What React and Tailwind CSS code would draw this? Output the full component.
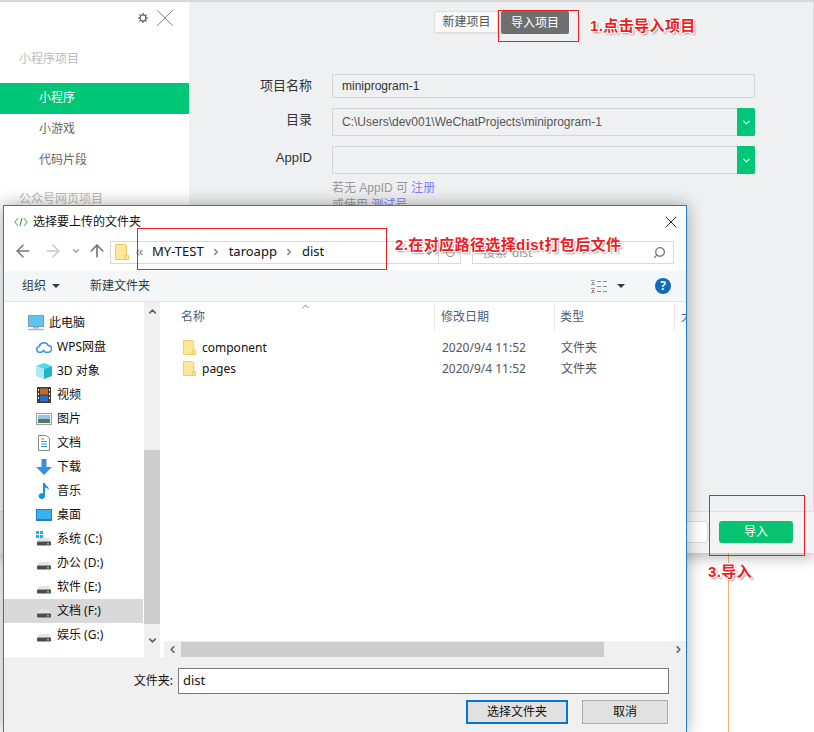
import { ChevronDown, ChevronUp, ChevronLeft, ChevronRight, ChevronsLeft, ArrowLeft, ArrowRight, ArrowUp, RotateCw, Search, X } from 'lucide-react';

const cjk = "font-['Noto_Sans','Noto_Sans_CJK_SC',sans-serif]";
const arial = "font-['Liberation_Sans','Noto_Sans_CJK_SC',sans-serif]";
const noteText = "font-['Liberation_Sans','Noto_Sans_CJK_SC',sans-serif] font-bold text-[15px] leading-[20px] tracking-[0.4px] whitespace-nowrap text-[#ee1c25] [text-shadow:1px_1px_0_#fff,-1px_1px_0_#fff,1px_-1px_0_#fff,-1px_-1px_0_#fff,2px_2px_2px_#999]";

function FolderIcon({ className = 'w-[14px] h-[16px]' }) {
    return (
        <svg viewBox="0 0 14 16" className={className}>
            <path d="M.5.5h10l1 1V15.500H.5z" fill="#fde89a" stroke="#eecb5c" />
            <path d="M10 15.500V11h3.500v4.500z" fill="#fbe28c" stroke="#eecb5c" />
        </svg>
    );
}

function DriveIcon({ windows }) {
    return (
        <svg viewBox="0 0 16 16" className="w-4 h-4">
            {windows && <path d="M0 0h3v3H0zM4 0h3v3H4zM0 4h3v3H0zM4 4h3v3H4z" fill="#14b4ee" />}
            <path d="M3 7h10l2 3.500H1z" fill="#e3e3e3" />
            <rect x="1" y="10.500" width="14" height="4" rx="1" fill="#4d4d4d" />
            <rect x="11" y="12" width="2" height="1.500" fill="#55dd55" />
        </svg>
    );
}

function TreeIcon({ name }) {
    if (name === 'pc') return (
        <svg viewBox="0 0 16 16" className="w-4 h-4">
            <rect x=".5" y=".5" width="15" height="11" fill="#5cc3f2" stroke="#7d9db2" />
            <path d="M5 12h6v1.500H5z" fill="#9bb" />
            <path d="M0 14.500h16" stroke="#a7b4bd" strokeWidth="1.500" />
        </svg>
    );
    if (name === 'cloud') return (
        <svg viewBox="0 0 17 14" className="w-[17px] h-[14px]" fill="none" stroke="#3f8cf0" strokeWidth="1.600">
            <path d="M4 12.500a3 3 0 0 1-.5-6A5 5 0 0 1 13 5.500a3.500 3.500 0 0 1 0 7H10L8 10.500 6 12.500z" />
        </svg>
    );
    if (name === '3d') return (
        <svg viewBox="0 0 16 16" className="w-4 h-4">
            <path d="M8 0l8 3-8 3-8-3z" fill="#4fd8e6" />
            <path d="M0 3l8 3v10l-8-3z" fill="#a8ecf2" />
            <path d="M16 3l-8 3v10l8-3z" fill="#1fb3cc" />
        </svg>
    );
    if (name === 'video') return (
        <svg viewBox="0 0 14 16" className="w-[14px] h-4">
            <rect width="14" height="16" fill="#3c3c3c" />
            <rect x="3" y="1.500" width="8" height="6" fill="#c46a28" />
            <rect x="3" y="8.500" width="8" height="6" fill="#2a6fc4" />
            <path d="M1 2h1v2H1zM1 6h1v2H1zM1 10h1v2H1zM12 2h1v2h-1zM12 6h1v2h-1zM12 10h1v2h-1z" fill="#eee" />
        </svg>
    );
    if (name === 'image') return (
        <svg viewBox="0 0 16 12" className="w-4 h-3">
            <rect x=".5" y=".5" width="15" height="11" fill="#f4f4f4" stroke="#a0a0a0" />
            <rect x="2" y="2" width="12" height="4" fill="#9dc3e6" />
            <rect x="2" y="6" width="12" height="4" fill="#4f7a66" />
        </svg>
    );
    if (name === 'doc') return (
        <svg viewBox="0 0 12 16" className="w-3 h-4">
            <path d="M.5.5h8l3 3v12H.5z" fill="#fff" stroke="#8a8a8a" />
            <path d="M3 4h3M3 6.500h6M3 9h6M3 11.500h6" stroke="#2d9be0" />
        </svg>
    );
    if (name === 'down') return (
        <svg viewBox="0 0 16 16" className="w-4 h-4">
            <path d="M5.500 0h5v8H16l-8 8-8-8h5.500z" fill="#3d8fdc" />
        </svg>
    );
    if (name === 'music') return (
        <svg viewBox="0 0 12 16" className="w-3 h-4">
            <path d="M5 0h2c0 3 4 3 4 7-1-1.500-2-2-4-2.500V13a3.200 3 0 1 1-2-2.700z" fill="#1e8fe0" />
        </svg>
    );
    if (name === 'desktop') return (
        <svg viewBox="0 0 16 12" className="w-4 h-3">
            <rect width="16" height="12" fill="#1f7fc9" />
            <rect x="1" y="1" width="14" height="9" fill="#3ab2f2" />
        </svg>
    );
    return <DriveIcon windows={name === 'c'} />;
}

const treeItems = [
    { icon: 'pc', label: '此电脑', top: true },
    { icon: 'cloud', label: 'WPS网盘' },
    { icon: '3d', label: '3D 对象' },
    { icon: 'video', label: '视频' },
    { icon: 'image', label: '图片' },
    { icon: 'doc', label: '文档' },
    { icon: 'down', label: '下载' },
    { icon: 'music', label: '音乐' },
    { icon: 'desktop', label: '桌面' },
    { icon: 'c', label: '系统 (C:)' },
    { icon: 'd', label: '办公 (D:)' },
    { icon: 'd', label: '软件 (E:)' },
    { icon: 'd', label: '文档 (F:)', selected: true },
    { icon: 'd', label: '娱乐 (G:)' },
];

function BackWindow() {
    return (
        <div className={`absolute left-0 top-0 w-[814px] h-[553px] flex flex-col bg-[#eff0f2] border-t-2 border-[#d8d8d8] shadow-[0_4px_14px_rgba(0,0,0,0.3)] ${arial}`}>
            <div className="flex flex-1 min-h-0">
                {/* Left menu */}
                <div className="w-[189px] bg-white flex flex-col shrink-0">
                    <div className="flex justify-end items-center gap-[2px] pr-[9px] h-[32px]">
                        <svg viewBox="0 0 10 10" className="w-[10px] h-[10px]" fill="none" stroke="#555" strokeWidth="1.200">
                            <circle cx="5" cy="5" r="3" />
                            <path d="M5 0v2M5 8v2M0 5h2M8 5h2M1.500 1.500l1 1M7.500 7.500l1 1M1.500 8.500l1-1M7.500 2.500l1-1" />
                        </svg>
                        <X size={30} strokeWidth={0.8} className="text-[#888]" />
                    </div>
                    <div className="pl-[19px] mt-[15px] text-[12px] leading-[20px] text-[#bbb]">小程序项目</div>
                    <div className="mt-[14px] h-[31px] pl-[39px] pb-[1px] flex items-center bg-[#00c777] text-white text-[12px]">小程序</div>
                    <div className="h-[31px] pl-[39px] pb-[1px] flex items-center text-[#666] text-[12px]">小游戏</div>
                    <div className="h-[31px] pl-[39px] pb-[1px] flex items-center text-[#666] text-[12px]">代码片段</div>
                    <div className="pl-[19px] mt-[13px] text-[12px] leading-[20px] text-[#bbb]">公众号网页项目</div>
                </div>

                {/* Form */}
                <div className="flex-1 pt-[9px] pl-[71px] flex flex-col border-r border-[#dcdcdc]">
                    <div className="flex pl-[174px] h-[23px]">
                        <div className="w-[64px] h-[23px] pl-[1px] flex items-center justify-center rounded-l-[3px] bg-[#fafafa] border border-[#dfdfdf] border-b-2 text-[12px] text-[#555]">新建项目</div>
                        <div className="ml-[3px] w-[68px] h-[23px] flex items-center justify-center rounded-[2px] bg-[#6f6f6f] text-white text-[12px]">导入项目</div>
                    </div>
                    <div className="mt-[40px] flex items-center h-[24px]">
                        <div className="w-[52px] text-right text-[13px] text-[#333] whitespace-nowrap">项目名称</div>
                        <div className="ml-[20px] w-[423px] h-[24px] border border-[#d4d5d7] pl-[9px] flex items-center text-[12px] text-[#333]">miniprogram-1</div>
                    </div>
                    <div className="mt-[10px] flex items-center h-[28px]">
                        <div className="w-[52px] pb-[4px] text-right text-[13px] text-[#333]">目录</div>
                        <div className="ml-[20px] w-[423px] h-[28px] border border-[#d4d5d7] pl-[9px] flex items-center justify-between text-[12px] text-[#555] relative">
                            C:\Users\dev001\WeChatProjects\miniprogram-1
                            <span className="absolute -right-px -top-px w-[18px] h-[28px] bg-[#00c777] rounded-r-[2px] flex items-center justify-center"><ChevronDown size={11} className="text-white" strokeWidth={2.500} /></span>
                        </div>
                    </div>
                    <div className="mt-[10px] flex items-center h-[28px]">
                        <div className="w-[52px] pb-[4px] text-right text-[13px] text-[#333]">AppID</div>
                        <div className="ml-[20px] w-[423px] h-[28px] border border-[#d4d5d7] relative">
                            <span className="absolute -right-px -top-px w-[18px] h-[28px] bg-[#00c777] rounded-r-[2px] flex items-center justify-center"><ChevronDown size={11} className="text-white" strokeWidth={2.500} /></span>
                        </div>
                    </div>
                    <div className="ml-[72px] mt-[6px] text-[12px] leading-[17px] text-[#999]">
                        <div>若无 AppID 可 <span className="text-[#7d7dff]">注册</span></div>
                        <div>或使用 <span className="text-[#7d7dff]">测试号</span></div>
                    </div>
                </div>
            </div>

            {/* Bottom bar */}
            <div className="h-[42px] shrink-0 bg-[#f4f4f5] border-t border-[#e0e0e2] flex items-center justify-end pr-[21px] pb-[2px] gap-[11px]">
                <div className="w-[74px] h-[22px] bg-white border border-[#dedede] rounded-[3px]" />
                <div className="w-[74px] h-[22px] bg-[#07c371] rounded-[3px] flex items-center justify-center text-white text-[12px]">导入</div>
            </div>
        </div>
    );
}

function FileDialog() {
    return (
        <div className={`absolute left-[3px] top-[205px] w-[684px] h-[527px] flex flex-col bg-white border-x border-t border-[#1b7fd0] shadow-[0_0_16px_rgba(0,0,0,0.35)] text-[12px] text-[#111] ${cjk}`}>
            {/* Title bar */}
            <div className="h-[32px] shrink-0 flex items-center pl-[10px] pr-[5px]">
                <svg viewBox="0 0 14 10" className="w-[14px] h-[10px]" fill="none" strokeWidth="1.200">
                    <path d="M4 1L1 5l3 4" stroke="#5cc75c" />
                    <path d="M8 1L6 9" stroke="#7a7a7a" />
                    <path d="M10 1l3 4-3 4" stroke="#5cc75c" />
                </svg>
                <span className="ml-[5px]">选择要上传的文件夹</span>
                <X size={20} strokeWidth={1} className="ml-auto text-black" />
            </div>

            {/* Navigation row */}
            <div className="h-[33px] shrink-0 flex items-start">
                <div className="w-[106px] h-[26px] pl-[9px] flex items-center shrink-0">
                    <ArrowLeft size={20} strokeWidth={1.800} className="text-[#767676]" />
                    <ArrowRight size={20} strokeWidth={1.800} className="ml-[10px] text-[#c8c8c8]" />
                    <ChevronDown size={10} strokeWidth={3} className="ml-[8px] text-[#9a9a9a]" />
                    <ArrowUp size={20} strokeWidth={2} className="ml-[6px] text-[#767676]" />
                </div>
                <div className="w-[351px] h-[23px] mt-[3px] pb-[1px] border border-[#d9d9d9] flex items-center pl-[4px] shrink-0 relative text-[13px]">
                    <FolderIcon />
                    <ChevronsLeft size={11} strokeWidth={2.500} className="ml-[5px] text-[#888]" />
                    <span className="ml-[7px]">MY-TEST</span>
                    <ChevronRight size={10} strokeWidth={3} className="mx-[7.500px] text-[#777]" />
                    <span>taroapp</span>
                    <ChevronRight size={10} strokeWidth={3} className="mx-[7.500px] text-[#777]" />
                    <span>dist</span>
                    <div className="absolute right-[21px] top-0 bottom-0 border-l border-[#d9d9d9]" />
                    <ChevronDown size={10} strokeWidth={3} className="absolute right-[26px] top-[6px] text-[#777]" />
                    <RotateCw size={11} className="absolute right-[4px] top-[5px] text-[#777]" />
                </div>
                <div className="ml-[11px] w-[202px] h-[23px] mt-[3px] border border-[#d9d9d9] flex items-center pl-[10px] pr-[7px] text-[#999] shrink-0">
                    搜索"dist"
                    <Search size={13} strokeWidth={2.500} className="ml-auto text-[#777] -scale-x-100" />
                </div>
            </div>

            {/* Toolbar */}
            <div className="h-[31px] shrink-0 bg-[#f5f6f7] border-b border-[#e4e4e4] flex items-center pl-[18px] pr-[15px] text-[#2a3a4a]">
                <span>组织</span>
                <span className="ml-[6px] w-0 h-0 border-x-[4px] border-x-transparent border-t-[4px] border-t-[#2b3b4b]" />
                <span className="ml-[30px]">新建文件夹</span>
                <svg viewBox="0 0 16 13" className="ml-auto w-[16px] h-[13px]">
                    <path d="M0 .5h4M0 4.500h4M0 8.500h4M0 12.500h4" stroke="#999" fill="none" />
                    <path d="M1 2h2v1.500H1z" fill="#4a90d9" />
                    <path d="M1 10h2v1.500H1z" fill="#d94a4a" />
                    <path d="M6 1.500h4M12 1.500h4M6 6.500h4M12 6.500h4M6 11.500h4M12 11.500h4" stroke="#8a8a8a" fill="none" />
                </svg>
                <span className="ml-[10px] w-0 h-0 border-x-[4px] border-x-transparent border-t-[4px] border-t-[#2b3b4b]" />
                <span className="ml-[30px] w-4 h-4 rounded-full bg-[#0f6cbd] text-white text-[12px] leading-4 font-bold text-center">?</span>
            </div>

            {/* Tree and file list */}
            <div className="h-[355px] shrink-0 flex">
                <div className="w-[140px] shrink-0 pt-[9px]">
                    {treeItems.map((item) => (
                        <div key={item.label} className={`h-[24px] mr-[1px] flex items-center ${item.top ? 'pl-[24px]' : 'pl-[32px]'} ${item.selected ? 'bg-[#d9d9d9]' : ''}`}>
                            <span className="w-[16px] flex justify-center shrink-0"><TreeIcon name={item.icon} /></span>
                            <span className="ml-[5px] whitespace-nowrap">{item.label}</span>
                        </div>
                    ))}
                </div>
                <div className="w-[16px] shrink-0 bg-[#f0f0f0] flex flex-col items-center">
                    <div className="h-[148px] w-full flex flex-col items-center pt-[4px]">
                        <ChevronUp size={11} strokeWidth={3.500} className="text-[#606060]" />
                    </div>
                    <div className="h-[174px] w-full bg-[#cdcdcd]" />
                    <div className="flex-1 flex items-center"><ChevronDown size={11} strokeWidth={3.500} className="text-[#606060]" /></div>
                </div>
                <div className="flex-1 min-w-0 flex flex-col relative pl-[3px] overflow-hidden">
                    <div className="h-[28px] pt-[1px] flex items-center text-[#4c607a] relative">
                        <span className="w-[272px] shrink-0 pl-[18px] h-full flex items-center border-r border-[#e5e5e5]">名称</span>
                        <span className="w-[120px] shrink-0 pl-[6px] h-full flex items-center border-r border-[#e5e5e5]">修改日期</span>
                        <span className="w-[120px] shrink-0 pl-[5px] h-full flex items-center border-r border-[#e5e5e5]">类型</span>
                        <span className="pl-[6px] shrink-0">大</span>
                        <ChevronUp size={11} className="absolute left-[137px] -top-[1px] text-[#777]" />
                    </div>
                    <div className="mt-[7px] flex flex-col">
                        <div className="h-[21px] flex items-center">
                            <span className="w-[273px] pl-[20px] flex items-center shrink-0"><FolderIcon className="w-[13px] h-[15px]" /><span className="ml-[6px]">component</span></span>
                            <span className="w-[120px] pl-[6px] text-[#555]">2020/9/4 11:52</span>
                            <span className="pl-[5px] text-[#555]">文件夹</span>
                        </div>
                        <div className="h-[21px] flex items-center">
                            <span className="w-[273px] pl-[20px] flex items-center shrink-0"><FolderIcon className="w-[13px] h-[15px]" /><span className="ml-[6px]">pages</span></span>
                            <span className="w-[120px] pl-[6px] text-[#555]">2020/9/4 11:52</span>
                            <span className="pl-[5px] text-[#555]">文件夹</span>
                        </div>
                    </div>
                    <div className="mt-auto ml-[1px] h-[16px] bg-[#f0f0f0] flex items-center">
                        <ChevronLeft size={11} strokeWidth={3.500} className="w-[17px] text-[#606060] shrink-0" />
                        <div className="w-[423px] h-[15px] bg-[#cdcdcd]" />
                        <ChevronRight size={11} strokeWidth={3.500} className="ml-auto mr-[2px] text-[#606060]" />
                    </div>
                </div>
            </div>

            {/* Footer */}
            <div className="flex-1 bg-[#f0f0f0] flex flex-col items-end pr-[17px] pt-[11px]">
                <div className="flex items-center">
                    <span className="mr-[5px]">文件夹:</span>
                    <div className="w-[491px] h-[26px] bg-white border border-[#7a7a7a] flex items-center pl-[4px] text-[13px]">dist</div>
                </div>
                <div className="mt-[6px] mr-[1px] flex gap-[14px]">
                    <div className="w-[102px] h-[24px] bg-[#e1e1e1] border-2 border-[#0078d7] flex items-center justify-center">选择文件夹</div>
                    <div className="w-[86px] h-[24px] bg-[#e1e1e1] border border-[#adadad] flex items-center justify-center">取消</div>
                </div>
            </div>
        </div>
    );
}

export default function App() {
    return (
        <div className="relative w-[814px] h-[732px] overflow-hidden bg-white">
            {/* Orange guide line behind the windows */}
            <div className="absolute left-[728px] top-[553px] w-px h-[179px] bg-[#f5b26f]" />
            <BackWindow />
            <FileDialog />

            {/* Red annotations */}
            <div className="absolute left-[498px] top-[10px] w-[81px] h-[32px] border border-[#ee1c25]" />
            <div className={`absolute left-[590px] top-[16px] ${noteText}`}>1.点击导入项目</div>
            <div className="absolute left-[137px] top-[228px] w-[250px] h-[42px] border border-[#ee1c25]" />
            <div className={`absolute left-[395px] top-[235px] ${noteText}`}>2.在对应路径选择dist打包后文件</div>
            <div className="absolute left-[709px] top-[495px] w-[96px] h-[61px] border border-[#ee1c25]" />
            <div className={`absolute left-[708px] top-[562px] ${noteText}`}>3.导入</div>
        </div>
    );
}
